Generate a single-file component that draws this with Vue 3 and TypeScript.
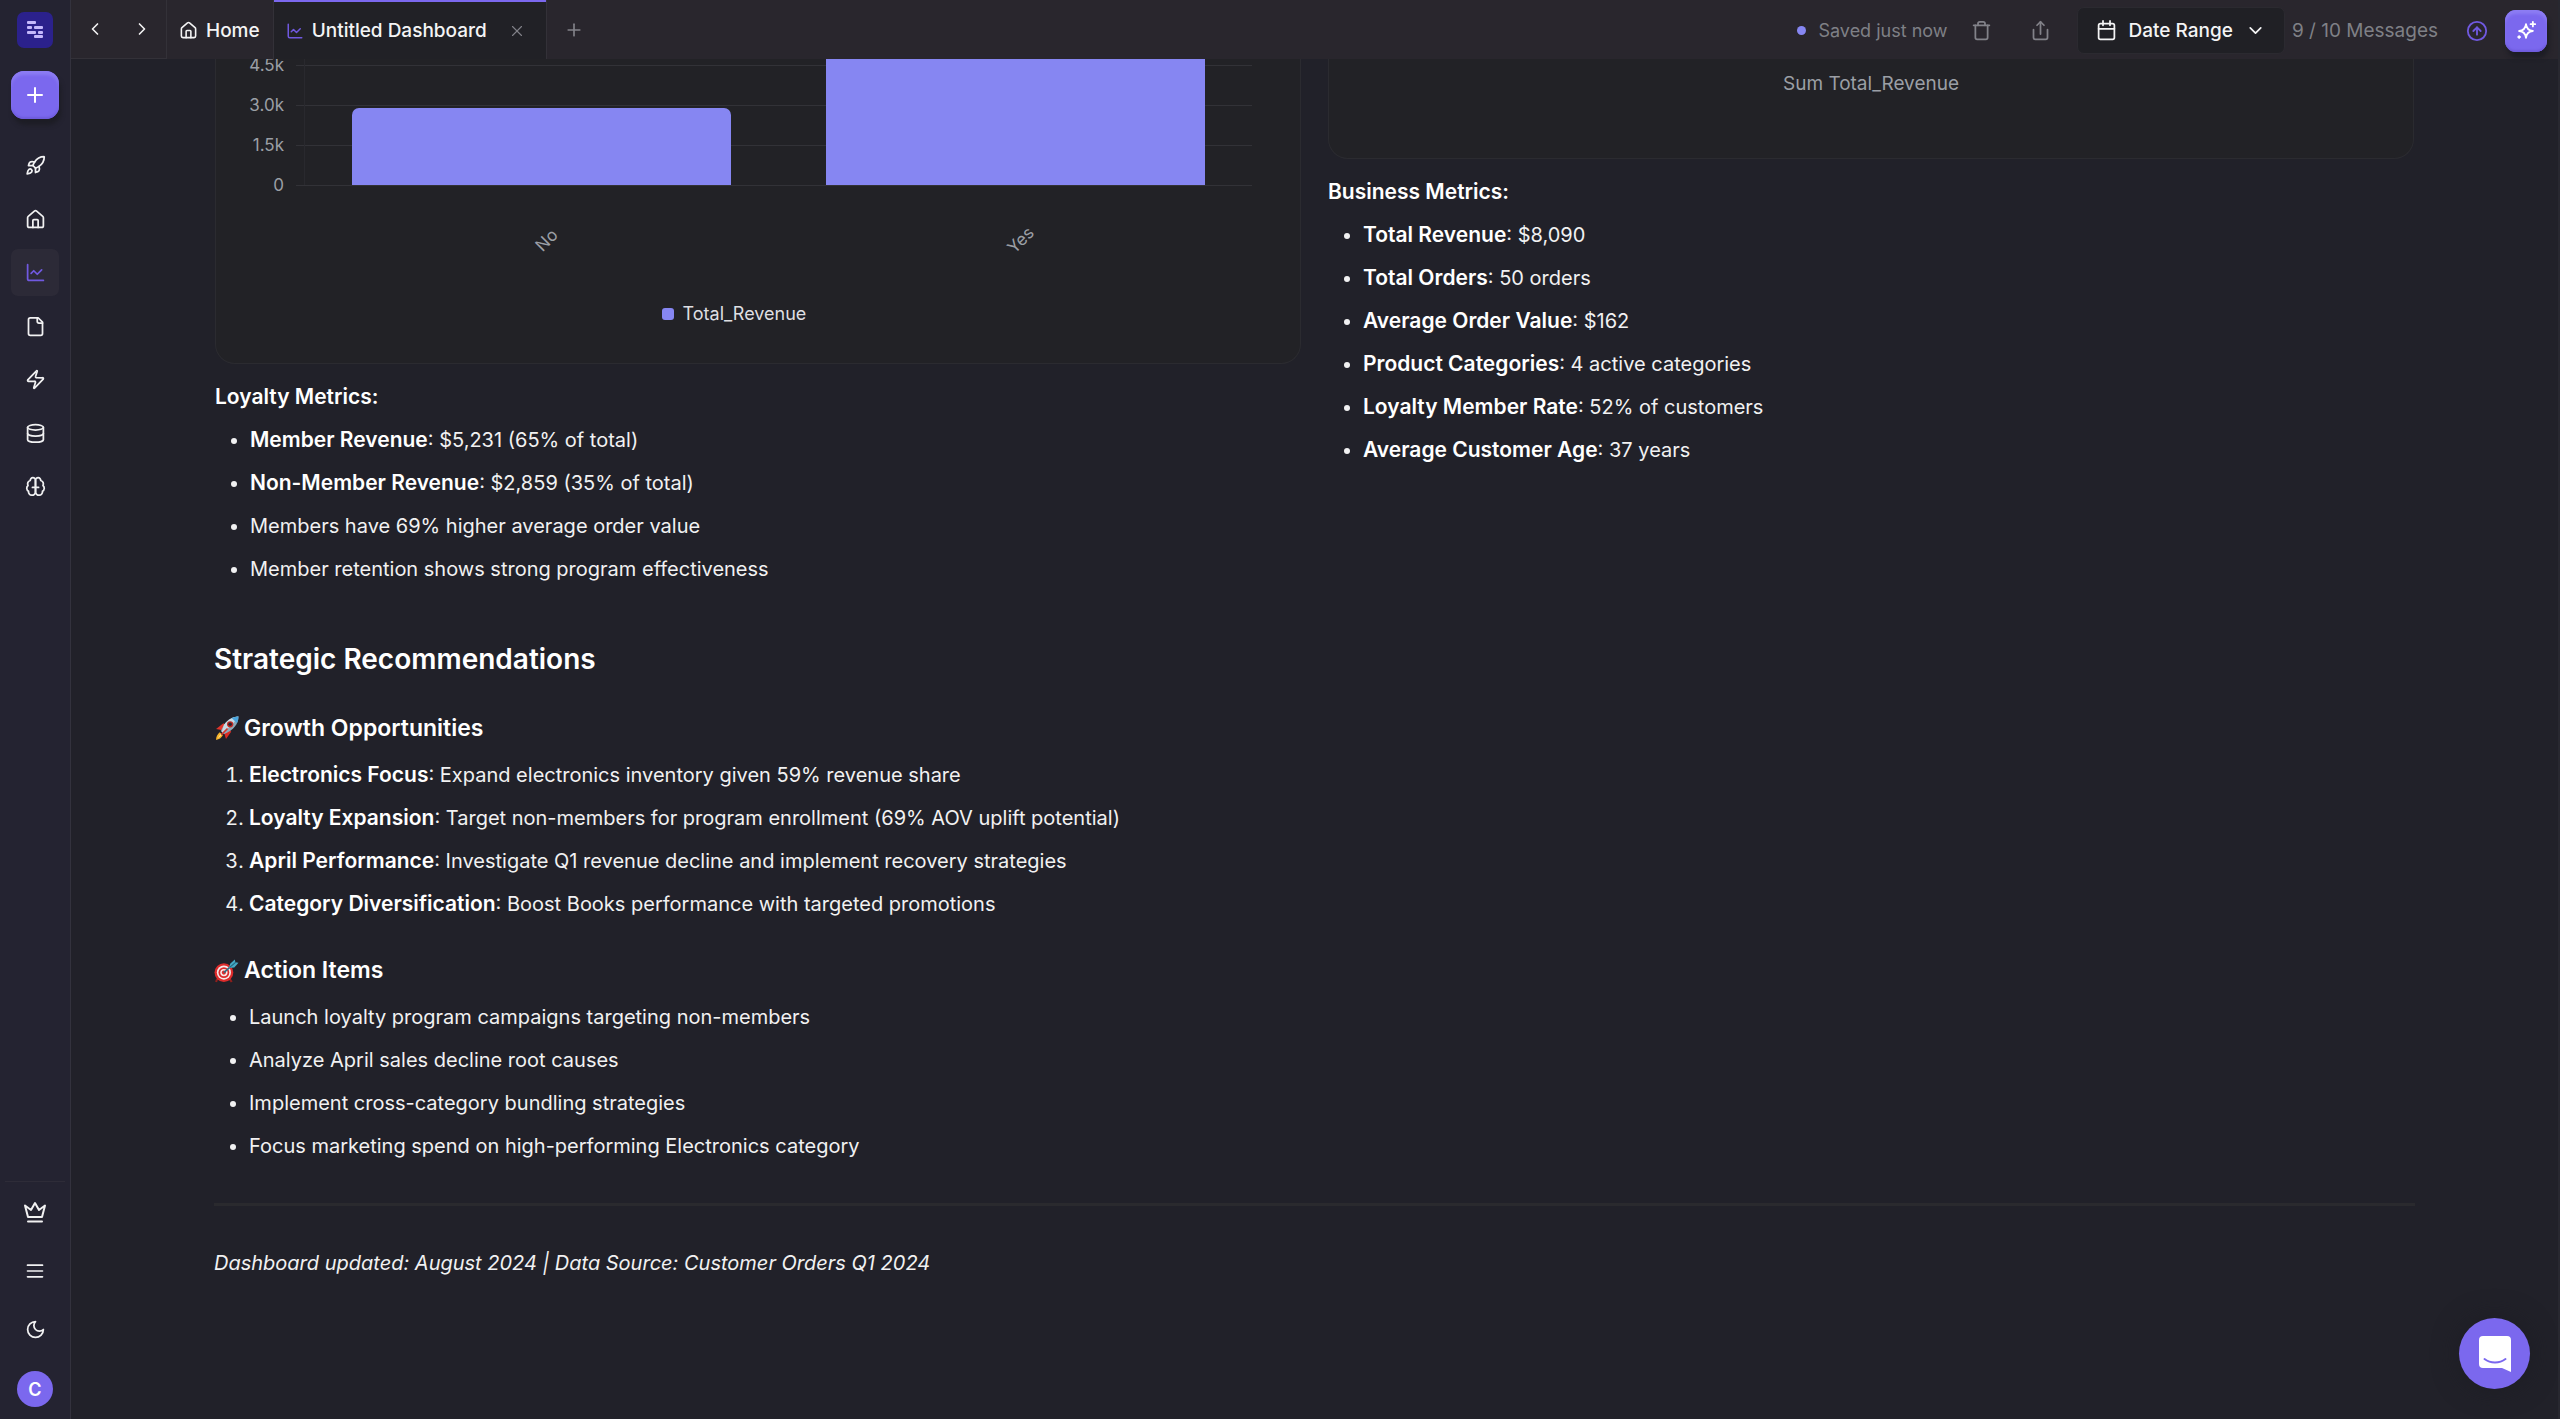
<script setup lang="ts">
interface Metric {
  label?: string
  text: string
}

type Shape = string[]

const icons: Record<string, Shape> = {
  rocket: [
    'M4.5 16.5c-1.5 1.26-2 5-2 5s3.74-.5 5-2c.71-.84.7-2.13-.09-2.91a2.18 2.18 0 0 0-2.91-.09z',
    'm12 15-3-3a22 22 0 0 1 2-3.95A12.88 12.88 0 0 1 22 2c0 2.72-.78 7.5-6 11a22.35 22.35 0 0 1-4 2z',
    'M9 12H4s.55-3.03 2-4c1.62-1.08 5 0 5 0',
    'M12 15v5s3.03-.55 4-2c1.08-1.62 0-5 0-5',
  ],
  home: [
    'M15 21v-8a1 1 0 0 0-1-1h-4a1 1 0 0 0-1 1v8',
    'M3 10a2 2 0 0 1 .709-1.528l7-6a2 2 0 0 1 2.582 0l7 6A2 2 0 0 1 21 10v9a2 2 0 0 1-2 2H5a2 2 0 0 1-2-2z',
  ],
  chart: ['M3 3v16a2 2 0 0 0 2 2h16', 'm19 9-5 5-4-4-3 3'],
  file: [
    'M15 2H6a2 2 0 0 0-2 2v16a2 2 0 0 0 2 2h12a2 2 0 0 0 2-2V7z',
    'M14 2v4a2 2 0 0 0 2 2h4',
  ],
  bolt: [
    'M4 14a1 1 0 0 1-.78-1.63l9.9-10.2a.5.5 0 0 1 .86.46l-1.92 6.02A1 1 0 0 0 13 10h7a1 1 0 0 1 .78 1.63l-9.9 10.2a.5.5 0 0 1-.86-.46l1.92-6.02A1 1 0 0 0 11 14z',
  ],
  database: [
    'M3 5a9 3 0 1 0 18 0a9 3 0 1 0-18 0',
    'M3 5v14a9 3 0 0 0 18 0V5',
    'M3 12a9 3 0 0 0 18 0',
  ],
  brain: [
    'M12 5a3 3 0 1 0-5.997.125 4 4 0 0 0-2.526 5.77 4 4 0 0 0 .556 6.588A4 4 0 1 0 12 18Z',
    'M12 5a3 3 0 1 1 5.997.125 4 4 0 0 1 2.526 5.77 4 4 0 0 1-.556 6.588A4 4 0 1 1 12 18Z',
    'M8.500 13h7',
  ],
  menu: ['M3 5h18', 'M3 12h18', 'M3 19h18'],
  moon: ['M12 3a6 6 0 0 0 9 9 9 9 0 1 1-9-9Z'],
  plus: ['M5 12h14', 'M12 5v14'],
  close: ['M18 6 6 18', 'm6 6 12 12'],
  left: ['m15 18-6-6 6-6'],
  right: ['m9 18 6-6-6-6'],
  down: ['m6 9 6 6 6-6'],
  trash: [
    'M3 6h18',
    'M19 6v14a2 2 0 0 1-2 2H7a2 2 0 0 1-2-2V6',
    'M8 6V4a2 2 0 0 1 2-2h4a2 2 0 0 1 2 2v2',
  ],
  share: ['M4 11v9a2 2 0 0 0 2 2h12a2 2 0 0 0 2-2v-9', 'm16 6-4-4-4 4', 'M12 2v14'],
  calendar: [
    'M8 1v5',
    'M16 1v5',
    'M5 4h14a2 2 0 0 1 2 2v14a2 2 0 0 1-2 2H5a2 2 0 0 1-2-2V6a2 2 0 0 1 2-2z',
    'M3 10h18',
  ],
  upload: ['M2 12a10 10 0 1 0 20 0a10 10 0 1 0-20 0', 'm16 12-4-4-4 4', 'M12 16V8'],
  sparkle: [
    'M12 4.500c.5 4.500 2.500 7 7.500 7.500-5 .5-7 3-7.500 7.500-.5-4.500-2.500-7-7.500-7.500 5-.5 7-3 7.500-7.500z',
    'M19.500 2v5',
    'M17 4.500h5',
    'M4.500 17.500v2',
    'M3.500 18.500h2',
  ],
  crown: ['M5 17 2 5.500l6 4.500 4-7 4 7 6-4.500L19 17z', 'M5 21.500h14'],
}

const navItems = [
  { icon: 'rocket', label: 'Get started' },
  { icon: 'home', label: 'Home' },
  { icon: 'chart', label: 'Dashboards' },
  { icon: 'file', label: 'Documents' },
  { icon: 'bolt', label: 'Automations' },
  { icon: 'database', label: 'Data sources' },
  { icon: 'brain', label: 'Knowledge' },
]

const footItems = [
  { icon: 'crown', label: 'Upgrade', size: 24 },
  { icon: 'menu', label: 'Menu', size: 20 },
  { icon: 'moon', label: 'Theme', size: 21 },
]

const ticks = ['4.5k', '3.0k', '1.5k', '0']
// One axis step of 1500 is 40px tall.
const bars = [
  { label: 'No', value: 2859 },
  { label: 'Yes', value: 5231 },
]
const barHeight = (value: number) => `${Math.round((value / 1500) * 40) + 1}px`

const loyalty: Metric[] = [
  { label: 'Member Revenue', text: '$5,231 (65% of total)' },
  { label: 'Non-Member Revenue', text: '$2,859 (35% of total)' },
  { text: 'Members have 69% higher average order value' },
  { text: 'Member retention shows strong program effectiveness' },
]
const business: Metric[] = [
  { label: 'Total Revenue', text: '$8,090' },
  { label: 'Total Orders', text: '50 orders' },
  { label: 'Average Order Value', text: '$162' },
  { label: 'Product Categories', text: '4 active categories' },
  { label: 'Loyalty Member Rate', text: '52% of customers' },
  { label: 'Average Customer Age', text: '37 years' },
]
const growth: Metric[] = [
  { label: 'Electronics Focus', text: 'Expand electronics inventory given 59% revenue share' },
  { label: 'Loyalty Expansion', text: 'Target non-members for program enrollment (69% AOV uplift potential)' },
  { label: 'April Performance', text: 'Investigate Q1 revenue decline and implement recovery strategies' },
  { label: 'Category Diversification', text: 'Boost Books performance with targeted promotions' },
]
const actions = [
  'Launch loyalty program campaigns targeting non-members',
  'Analyze April sales decline root causes',
  'Implement cross-category bundling strategies',
  'Focus marketing spend on high-performing Electronics category',
]
</script>

<template>
  <div class="app">
    <aside class="sidebar">
      <a class="logo" href="#" aria-label="Workspace">
        <svg viewBox="0 0 36 36" width="36" height="36" fill="#c4b8fb">
          <rect x="10" y="9" width="9" height="3" rx="1" />
          <rect x="10" y="14" width="5" height="3" rx="1" />
          <rect x="17" y="14" width="9" height="3" rx="1" />
          <rect x="10" y="19" width="9" height="3" rx="1" />
          <rect x="21" y="19" width="5" height="3" rx="1" />
          <rect x="17" y="23" width="9" height="3" rx="1" />
        </svg>
      </a>
      <button class="create glossy" aria-label="Create">
        <svg class="icon" viewBox="0 0 24 24" width="24" height="24">
          <path v-for="d in icons.plus" :key="d" :d="d" />
        </svg>
      </button>
      <nav class="nav">
        <a
          v-for="item in navItems"
          :key="item.icon"
          href="#"
          class="nav-item"
          :class="{ active: item.icon === 'chart' }"
          :aria-label="item.label"
        >
          <svg class="icon" viewBox="0 0 24 24" width="21" height="21">
            <path v-for="d in icons[item.icon]" :key="d" :d="d" />
          </svg>
        </a>
      </nav>
      <div class="side-foot">
        <button v-for="item in footItems" :key="item.icon" class="foot-item" :aria-label="item.label">
          <svg class="icon" viewBox="0 0 24 24" :width="item.size" :height="item.size">
            <path v-for="d in icons[item.icon]" :key="d" :d="d" />
          </svg>
        </button>
        <button class="avatar">C</button>
      </div>
    </aside>

    <div class="main">
      <header class="topbar">
        <div class="history">
          <button aria-label="Back">
            <svg class="icon" viewBox="0 0 24 24" width="20" height="20">
              <path :d="icons.left[0]" />
            </svg>
          </button>
          <button aria-label="Forward">
            <svg class="icon" viewBox="0 0 24 24" width="20" height="20">
              <path :d="icons.right[0]" />
            </svg>
          </button>
        </div>
        <a class="tab home-tab" href="#">
          <svg class="icon" viewBox="0 0 24 24" width="19" height="19">
            <path v-for="d in icons.home" :key="d" :d="d" />
          </svg>
          Home
        </a>
        <div class="tab current">
          <svg class="icon violet" viewBox="0 0 24 24" width="18" height="18">
            <path v-for="d in icons.chart" :key="d" :d="d" />
          </svg>
          <span>Untitled Dashboard</span>
          <button class="quiet" aria-label="Close tab">
            <svg class="icon thin" viewBox="0 0 24 24" width="18" height="18">
              <path v-for="d in icons.close" :key="d" :d="d" />
            </svg>
          </button>
        </div>
        <button class="quiet new-tab" aria-label="New tab">
          <svg class="icon" viewBox="0 0 24 24" width="20" height="20">
            <path v-for="d in icons.plus" :key="d" :d="d" />
          </svg>
        </button>

        <div class="tools">
          <span class="saved"><i class="dot"></i>Saved just now</span>
          <button class="quiet tool" aria-label="Delete">
            <svg class="icon" viewBox="0 0 24 24" width="21" height="21">
              <path v-for="d in icons.trash" :key="d" :d="d" />
            </svg>
          </button>
          <button class="quiet tool" aria-label="Share">
            <svg class="icon" viewBox="0 0 24 24" width="21" height="21">
              <path v-for="d in icons.share" :key="d" :d="d" />
            </svg>
          </button>
          <button class="range">
            <svg class="icon" viewBox="0 0 24 24" width="21" height="21">
              <path v-for="d in icons.calendar" :key="d" :d="d" />
            </svg>
            Date Range
            <svg class="icon" viewBox="0 0 24 24" width="21" height="21">
              <path :d="icons.down[0]" />
            </svg>
          </button>
          <span class="messages">9 / 10 Messages</span>
          <button class="quiet upload" aria-label="Upgrade plan">
            <svg class="icon violet" viewBox="0 0 24 24" width="22" height="22">
              <path v-for="d in icons.upload" :key="d" :d="d" />
            </svg>
          </button>
          <button class="assistant glossy" aria-label="Assistant">
            <svg class="icon" viewBox="0 0 24 24" width="22" height="22">
              <path v-for="d in icons.sparkle" :key="d" :d="d" />
            </svg>
          </button>
        </div>
      </header>

      <main class="content">
        <div class="columns">
          <section>
            <div class="card">
              <div class="plot">
                <div v-for="tick in ticks" :key="tick" class="tick">
                  <span>{{ tick }}</span>
                  <i></i>
                </div>
                <div class="bars">
                  <div
                    v-for="bar in bars"
                    :key="bar.label"
                    class="bar"
                    :style="{ height: barHeight(bar.value) }"
                  ></div>
                </div>
              </div>
              <div class="x-axis">
                <div v-for="bar in bars" :key="bar.label"><span>{{ bar.label }}</span></div>
              </div>
              <div class="legend"><i></i>Total_Revenue</div>
            </div>
            <p><strong>Loyalty Metrics:</strong></p>
            <ul>
              <li v-for="item in loyalty" :key="item.text">
                <template v-if="item.label"><strong>{{ item.label }}</strong>: </template>{{ item.text }}
              </li>
            </ul>
          </section>
          <section>
            <div class="card total">Sum Total_Revenue</div>
            <p><strong>Business Metrics:</strong></p>
            <ul>
              <li v-for="item in business" :key="item.text">
                <strong>{{ item.label }}</strong>: {{ item.text }}
              </li>
            </ul>
          </section>
        </div>

        <h2>Strategic Recommendations</h2>

        <h3>
          <svg viewBox="0 0 24 24" width="25" height="25" role="img" aria-label="Rocket">
            <path d="M2 12.500 9 7l4 3-6 3.500z" fill="#e0352b" />
            <path d="m11.500 22 5-7-3-4-3.500 6z" fill="#d92a22" />
            <path d="M2 23c0-3 1-5.500 3.500-7.500l3 3C7 21 5 22.500 2 23z" fill="#f7b32b" />
            <path d="m3.500 21.500 3-4.500 1 1z" fill="#fff09a" />
            <path d="M23.500.5c-7 .3-12.500 4-17 14l3 3c9.500-4 14-10 14-17z" fill="#8fa9b8" />
            <path d="M23.500.5c-5.500.3-10 2.500-14 8L7.500 15l1 1C14 12 19 7 23.500.5z" fill="#c9dbe4" />
            <path d="M23.500.5c-2.500.1-4.500.5-6.500 1.500L22 7c1-2 1.500-4 1.500-6.500z" fill="#4aa5dd" />
            <circle cx="15.500" cy="8" r="3" fill="#c22b24" />
            <circle cx="15.500" cy="8" r="1.700" fill="#2b2430" />
            <path d="m7 18 6-6" stroke="#d5332a" stroke-width="1.600" />
          </svg>
          Growth Opportunities
        </h3>
        <ol>
          <li v-for="item in growth" :key="item.text">
            <strong>{{ item.label }}</strong>: {{ item.text }}
          </li>
        </ol>

        <h3>
          <svg viewBox="0 0 24 24" width="25" height="25" role="img" aria-label="Bullseye">
            <path d="m3 20-1 3M15 20l2 3" stroke="#8f1f1c" stroke-width="2" />
            <circle cx="9.500" cy="14" r="9" fill="#dc2b2b" />
            <circle cx="9.500" cy="14" r="6.800" fill="#f6e9e9" />
            <circle cx="9.500" cy="14" r="5.200" fill="#dc2b2b" />
            <circle cx="9.500" cy="14" r="3.500" fill="#f6e9e9" />
            <circle cx="9.500" cy="14" r="2" fill="#dc2b2b" />
            <path d="M9.500 14 19 5.500" stroke="#2f6f86" stroke-width="1.600" />
            <path d="m14.500 9.500 1-4L20 1.500l.5 2.500 3 .5-4 4.500z" fill="#45a9c4" />
            <path d="m15 9 6-5" stroke="#23667e" stroke-width="1" />
          </svg>
          Action Items
        </h3>
        <ul>
          <li v-for="item in actions" :key="item">{{ item }}</li>
        </ul>

        <hr />
        <p class="updated"><em>Dashboard updated: August 2024 | Data Source: Customer Orders Q1 2024</em></p>
      </main>
    </div>

    <button class="chat" aria-label="Open chat">
      <svg viewBox="0 0 32 36" width="32" height="36">
        <path d="M4 0h24a4 4 0 0 1 4 4v32l-9-4H4a4 4 0 0 1-4-4V4a4 4 0 0 1 4-4z" fill="#fff" />
        <path d="M5.500 23c6 4.600 15 4.600 21 0" fill="none" stroke="#7b68ee" stroke-width="2" stroke-linecap="round" />
      </svg>
    </button>
  </div>
</template>

<style>
body {
  margin: 0;
  background: #212129;
}
</style>

<style scoped>
.app {
  display: flex;
  min-height: 100vh;
  font-family: Inter, 'Noto Sans', sans-serif;
  font-size: 20px;
  line-height: 43px;
  color: #f1f1f2;
  background: #212129;
}
button {
  display: flex;
  align-items: center;
  justify-content: center;
  padding: 0;
  border: 0;
  background: none;
  color: inherit;
  font: inherit;
}
a {
  color: inherit;
  text-decoration: none;
}
.icon {
  flex: none;
  fill: none;
  stroke: currentColor;
  stroke-width: 2;
  stroke-linecap: round;
  stroke-linejoin: round;
}
.thin {
  stroke-width: 1.5;
}
.violet {
  color: #7059e0;
}

.sidebar {
  position: sticky;
  top: 0;
  box-sizing: border-box;
  flex: none;
  display: flex;
  flex-direction: column;
  align-items: center;
  width: 71px;
  height: 100vh;
  padding: 12px 0;
  border-right: 1px solid #33323d;
  background: #242331;
}
.logo {
  height: 36px;
  border-radius: 7px;
  background: #2b218c;
}
.logo svg {
  display: block;
}
.glossy {
  color: #fff;
  background: #7b68ee;
  box-shadow: inset 0 4px 3px #8c7cf3, inset 0 -2px 2px #6f5cdc, 2px 6px 4px #1d1d25;
}
.create {
  width: 48px;
  height: 48px;
  margin-top: 23px;
  border-radius: 13px;
}
.nav {
  display: flex;
  flex-direction: column;
  justify-content: space-between;
  height: 368px;
  margin-top: 23px;
}
.nav-item {
  display: flex;
  align-items: center;
  justify-content: center;
  width: 48px;
  height: 47px;
  border-radius: 7px;
}
.nav-item.active {
  background: #2c2a37;
  color: #7059e0;
}
.side-foot {
  display: flex;
  flex-direction: column;
  align-items: center;
  width: 60px;
  margin-top: auto;
  border-top: 1px solid #2e2c38;
}
.foot-item {
  width: 48px;
  height: 59px;
}
.avatar {
  width: 36px;
  height: 36px;
  margin-top: 12px;
  border-radius: 50%;
  background: #7b68ee;
  color: #fff;
  font-size: 18px;
  font-weight: 600;
}

.main {
  flex: 1;
  min-width: 0;
  border-right: 2px solid #282830;
}
.topbar {
  display: flex;
  height: 59px;
  background: #29262d;
  font-size: 19px;
  font-weight: 500;
  line-height: 24px;
}
.history {
  box-sizing: border-box;
  display: flex;
  width: 96px;
  border: solid #333138;
  border-width: 0 1px 1px 0;
}
.history button {
  flex: 1;
}
.tab {
  box-sizing: border-box;
  display: flex;
  align-items: center;
  padding-top: 2px;
  color: #f4f4f5;
}
.home-tab {
  gap: 8px;
  padding-left: 12px;
  padding-right: 13px;
}
.current {
  gap: 8px;
  width: 274px;
  padding-left: 12px;
  padding-right: 20px;
  border: solid #333138;
  border-width: 0 1px;
  background: #212126;
  box-shadow: inset 0 2px #7b68ee;
}
.current button {
  margin-left: auto;
}
.quiet {
  color: #828289;
}
.new-tab {
  width: 54px;
}
.tools {
  display: flex;
  align-items: center;
  margin-left: auto;
  padding: 2px 11px 0 0;
}
.saved,
.messages {
  color: #7f8086;
  font-weight: 400;
}
.saved {
  display: flex;
  align-items: center;
  gap: 12px;
  margin-right: 4px;
  font-size: 18px;
}
.dot {
  width: 9px;
  height: 9px;
  border-radius: 50%;
  background: #8686f2;
}
.tool {
  width: 59px;
}
.range {
  box-sizing: border-box;
  gap: 12px;
  height: 47px;
  margin: 0 7px;
  padding: 0 18px;
  border: 1px solid #2b2a30;
  border-radius: 7px;
  background: #202025;
  color: #f4f4f5;
}
.upload {
  width: 22px;
  margin: 0 17px 0 28px;
}
.assistant {
  width: 42px;
  height: 42px;
  border-radius: 11px;
}

.content {
  overflow: hidden;
  padding: 0 143px 120px;
}
.columns {
  display: grid;
  grid-template-columns: 1fr 1fr;
  gap: 27px;
  padding: 0 1px;
}
.card {
  border: 1px solid #2b2b30;
  border-top: 0;
  border-radius: 0 0 20px 20px;
  background: #222226;
  color: #9b9fa5;
  font-size: 17px;
  line-height: 24px;
}
.total {
  padding: 13px 0 62px;
  font-size: 19px;
  text-align: center;
}
.plot {
  position: relative;
  margin-top: -14px;
}
.tick {
  display: flex;
  align-items: center;
  gap: 12px;
  height: 40px;
  padding-right: 48px;
}
.tick span {
  width: 68px;
  text-align: right;
}
.tick i {
  flex: 1;
  height: 1px;
  background: #323237;
}
.bars {
  position: absolute;
  left: 88px;
  right: 48px;
  bottom: 20px;
  top: 0;
  display: flex;
  justify-content: space-around;
  align-items: flex-end;
  border-left: 1px solid #29292e;
}
.bar {
  width: 40%;
  border-radius: 7px 7px 0 0;
  background: #8686f2;
}
.x-axis {
  display: flex;
  margin: 15px 43px 0 94px;
}
.x-axis div {
  display: flex;
  align-items: center;
  justify-content: center;
  width: 50%;
  height: 40px;
}
.x-axis span {
  transform: rotate(-45deg);
}
.legend {
  display: flex;
  align-items: center;
  justify-content: center;
  gap: 9px;
  margin-top: 42px;
  padding: 0 48px 37px 0;
  color: #dfdfe2;
  font-size: 18px;
}
.legend i {
  width: 12px;
  height: 12px;
  border-radius: 3px;
  background: #8686f2;
}

p {
  margin: 12px 0 0;
}
strong {
  color: #fff;
  font-size: 21px;
  font-weight: 600;
  line-height: 24px;
}
ul,
ol {
  margin: 0;
  padding-left: 35px;
}
h2,
h3 {
  margin: 0;
  color: #fff;
  font-weight: 600;
}
h2 {
  margin-top: 48px;
  font-size: 28px;
  line-height: 40px;
}
h3 {
  display: flex;
  align-items: center;
  gap: 5px;
  margin: 28px 0 10px;
  font-size: 23px;
  line-height: 32px;
}
h2 + h3 {
  margin-top: 33px;
}
hr {
  height: 3px;
  margin: 35px 0 36px;
  border: 0;
  background: #2a2a2e;
}
.updated {
  margin: 0;
}

.chat {
  position: fixed;
  right: 30px;
  bottom: 30px;
  width: 71px;
  height: 71px;
  border-radius: 50%;
  background: #7b68ee;
  box-shadow: 0 0 26px #1d1d24;
}
</style>
